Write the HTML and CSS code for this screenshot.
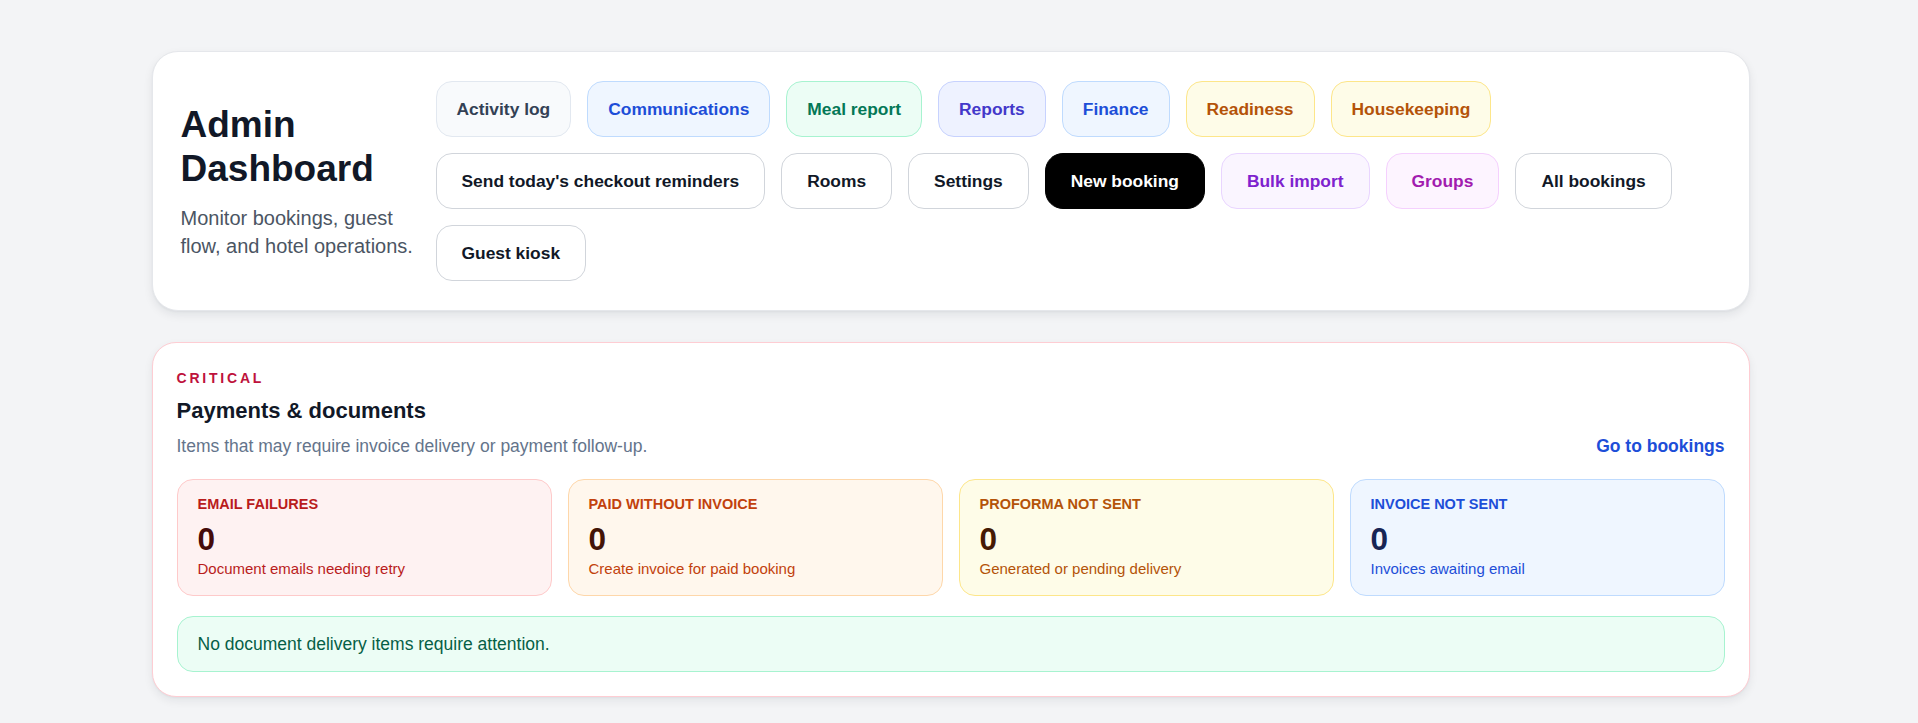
FILE: index.html
```html
<!DOCTYPE html>
<html lang="en">
<head>
    <meta charset="UTF-8">
    <meta name="viewport" content="width=device-width, initial-scale=1.0">
    <title>Admin Dashboard</title>
    <link rel="stylesheet" href="styles.css">
</head>
<body>
    <div class="page">
        <!-- Top header with navigation -->
        <header class="hero">
            <div class="hero-text">
                <h1>Admin Dashboard</h1>
                <p>Monitor bookings, guest flow, and hotel operations.</p>
            </div>
            <div class="actions">
                <nav class="btn-row">
                    <a href="#" class="pill pill-slate">Activity log</a>
                    <a href="#" class="pill pill-blue">Communications</a>
                    <a href="#" class="pill pill-green">Meal report</a>
                    <a href="#" class="pill pill-indigo">Reports</a>
                    <a href="#" class="pill pill-blue">Finance</a>
                    <a href="#" class="pill pill-amber">Readiness</a>
                    <a href="#" class="pill pill-amber">Housekeeping</a>
                </nav>
                <div class="btn-row">
                    <button class="btn">Send today's checkout reminders</button>
                    <a href="#" class="btn">Rooms</a>
                    <a href="#" class="btn">Settings</a>
                    <a href="#" class="btn btn-dark">New booking</a>
                    <a href="#" class="btn btn-purple">Bulk import</a>
                    <a href="#" class="btn btn-fuchsia">Groups</a>
                    <a href="#" class="btn">All bookings</a>
                    <a href="#" class="btn">Guest kiosk</a>
                </div>
            </div>
        </header>

        <!-- Payments & documents panel -->
        <section class="panel">
            <p class="eyebrow">Critical</p>
            <h2>Payments &amp; documents</h2>
            <div class="panel-head">
                <p class="muted">Items that may require invoice delivery or payment follow-up.</p>
                <a href="#" class="link">Go to bookings</a>
            </div>

            <div class="stats">
                <div class="stat stat-red">
                    <div class="stat-label">Email failures</div>
                    <div class="stat-value">0</div>
                    <div class="stat-note">Document emails needing retry</div>
                </div>
                <div class="stat stat-orange">
                    <div class="stat-label">Paid without invoice</div>
                    <div class="stat-value">0</div>
                    <div class="stat-note">Create invoice for paid booking</div>
                </div>
                <div class="stat stat-amber">
                    <div class="stat-label">Proforma not sent</div>
                    <div class="stat-value">0</div>
                    <div class="stat-note">Generated or pending delivery</div>
                </div>
                <div class="stat stat-blue">
                    <div class="stat-label">Invoice not sent</div>
                    <div class="stat-value">0</div>
                    <div class="stat-note">Invoices awaiting email</div>
                </div>
            </div>

            <div class="notice">No document delivery items require attention.</div>
        </section>
    </div>
</body>
</html>
```

FILE: styles.css
```css
body {
    margin: 0;
    padding-right: 17px;
    background-color: #f3f4f6;
    font-family: "Liberation Sans", Arial, sans-serif;
    color: #111827;
}

.page {
    max-width: 1598px;
    margin: 0 auto;
    padding: 51px 0 48px;
    min-height: 2490px;
    box-sizing: border-box;
}

/* Header card */
.hero {
    display: flex;
    align-items: center;
    gap: 16px;
    background-color: #ffffff;
    border: 1px solid #e5e7eb;
    border-radius: 26px;
    padding: 29px 28px;
    box-shadow: 0 4px 10px rgba(15, 23, 42, 0.08), 0 1px 2px rgba(15, 23, 42, 0.04);
}

.hero-text {
    width: 239px;
    flex-shrink: 0;
}

.hero-text h1 {
    margin: 0;
    font-size: 37px;
    line-height: 44px;
    font-weight: 700;
    color: #111827;
}

.hero-text p {
    margin: 13px 0 0;
    font-size: 20px;
    line-height: 28px;
    color: #4b5563;
}

.actions {
    flex: 1;
    display: flex;
    flex-direction: column;
    gap: 16px;
}

.btn-row {
    display: flex;
    flex-wrap: wrap;
    gap: 16px;
}

/* Nav pills and action buttons */
.pill,
.btn {
    display: inline-block;
    padding: 16px 20px;
    border: 1px solid #d1d5db;
    border-radius: 16px;
    background-color: #ffffff;
    font-family: inherit;
    font-size: 17.4px;
    line-height: 22px;
    font-weight: 700;
    color: #111827;
    text-decoration: none;
    cursor: pointer;
}

.btn {
    padding: 16px 25px;
}

.pill-slate  { background-color: #f8fafc; border-color: #e2e8f0; color: #334155; }
.pill-blue   { background-color: #eff6ff; border-color: #bfdbfe; color: #1d4ed8; }
.pill-green  { background-color: #ecfdf5; border-color: #a7f3d0; color: #047857; }
.pill-indigo { background-color: #eef2ff; border-color: #c7d2fe; color: #4338ca; }
.pill-amber  { background-color: #fefce8; border-color: #fde68a; color: #b45309; }

.btn-dark {
    background-color: #000000;
    border-color: #000000;
    color: #ffffff;
    border-radius: 18px;
}

.btn-purple  { background-color: #faf5ff; border-color: #e9d5ff; color: #7e22ce; }
.btn-fuchsia { background-color: #fdf4ff; border-color: #f5d0fe; color: #a21caf; }

/* Critical panel */
.panel {
    margin-top: 31px;
    background-color: #ffffff;
    border: 1px solid #fecdd3;
    border-radius: 24px;
    padding: 25px 24px 24px;
    box-shadow: 0 4px 10px rgba(15, 23, 42, 0.07), 0 1px 2px rgba(15, 23, 42, 0.04);
}

.eyebrow {
    margin: 0;
    font-size: 14px;
    line-height: 20px;
    letter-spacing: 0.2em;
    font-weight: 700;
    text-transform: uppercase;
    color: #be123c;
}

.panel h2 {
    margin: 9px 0 0;
    font-size: 22px;
    line-height: 28px;
    font-weight: 700;
    color: #111827;
}

.panel-head {
    display: flex;
    justify-content: space-between;
    align-items: baseline;
    margin-top: 8px;
}

.muted {
    margin: 0;
    font-size: 17.5px;
    line-height: 26px;
    color: #64748b;
}

.link {
    font-size: 17.5px;
    font-weight: 700;
    color: #1d4ed8;
    text-decoration: none;
}

/* Stat cards */
.stats {
    display: grid;
    grid-template-columns: repeat(4, 1fr);
    gap: 16px;
    margin-top: 20px;
}

.stat {
    border: 1px solid;
    border-radius: 16px;
    padding: 16px 20px;
}

.stat-label {
    font-size: 14.5px;
    line-height: 17px;
    font-weight: 700;
    text-transform: uppercase;
}

.stat-value {
    margin-top: 8px;
    font-size: 31.5px;
    line-height: 36px;
    font-weight: 700;
}

.stat-note {
    margin-top: 2px;
    font-size: 15px;
    line-height: 20px;
}

.stat-red    { background-color: #fef2f2; border-color: #fecaca; color: #b91c1c; }
.stat-orange { background-color: #fff7ed; border-color: #fed7aa; color: #c2410c; }
.stat-amber  { background-color: #fefce8; border-color: #fde68a; color: #b45309; }
.stat-blue   { background-color: #eff6ff; border-color: #bfdbfe; color: #1d4ed8; }

.stat-red .stat-value    { color: #450a0a; }
.stat-orange .stat-value { color: #431407; }
.stat-amber .stat-value  { color: #451a03; }
.stat-blue .stat-value   { color: #172554; }

/* Empty state message */
.notice {
    margin-top: 20px;
    background-color: #ecfdf5;
    border: 1px solid #a7f3d0;
    border-radius: 16px;
    padding: 16px 20px;
    font-size: 17.5px;
    line-height: 22px;
    color: #065f46;
}
```
